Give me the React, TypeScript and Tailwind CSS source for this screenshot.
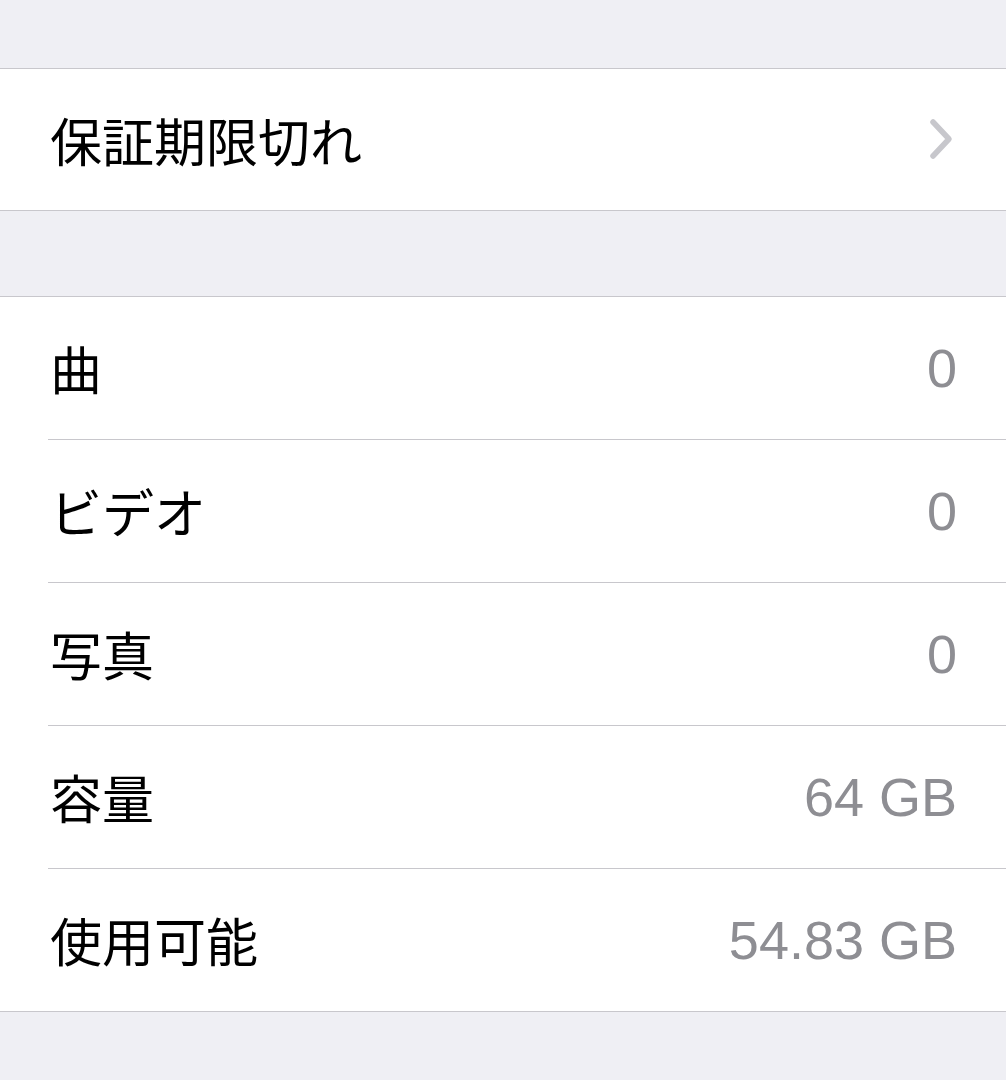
import React from "react";

const jp = { fontFamily: '"Noto Sans CJK JP", "Noto Sans", sans-serif' };
const num = { fontFamily: '"Liberation Sans", Arial, sans-serif' };

function Row({ label, value, last }: { label: string; value: string; last?: boolean }) {
  return (
    <div className="flex flex-col">
      <div className="h-[142px] flex items-center justify-between pl-[50px] pr-[49px]">
        <span className="text-[52px] text-black leading-none" style={jp}>{label}</span>
        <span className="text-[54px] text-[#8e8e93] leading-none" style={num}>{value}</span>
      </div>
      {!last && <div className="h-px bg-[#c8c7cc] ml-[48px]" />}
    </div>
  );
}

export default function App() {
  return (
    <div className="w-[1006px] h-[1080px] bg-[#efeff4] overflow-hidden flex flex-col">
      <div className="h-[68px]" />
      <div className="border-y border-[#c8c7cc] bg-white">
        <div className="h-[141px] flex items-center justify-between pl-[50px] pr-[52px]">
          <span className="text-[52px] text-black leading-none" style={jp}>保証期限切れ</span>
          <svg width="26" height="42" viewBox="0 0 26 42" fill="none" className="mt-[-2px]">
            <path d="M5 4 L21 21 L5 38" stroke="#c7c7cc" strokeWidth="5.5" strokeLinecap="round" strokeLinejoin="round" />
          </svg>
        </div>
      </div>
      <div className="h-[85px]" />
      <div className="border-y border-[#c8c7cc] bg-white">
        <Row label="曲" value="0" />
        <Row label="ビデオ" value="0" />
        <Row label="写真" value="0" />
        <Row label="容量" value="64 GB" />
        <Row label="使用可能" value="54.83 GB" last />
      </div>
    </div>
  );
}
